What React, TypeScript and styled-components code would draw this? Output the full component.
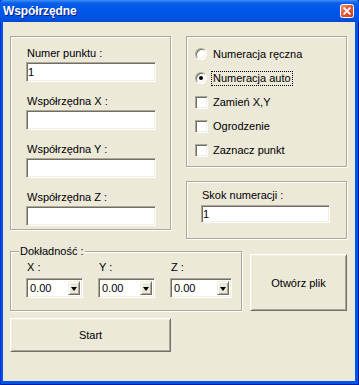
import React from 'react';
import styled, { createGlobalStyle } from 'styled-components';

const face = '#ECE9D8';
const shadow = '#ACA899';
const darkShadow = '#716F64';
const light = '#F1EFE2';

const GlobalStyle = createGlobalStyle`
  html, body {
    margin: 0;
    padding: 0;
  }
  body {
    font-family: "Liberation Sans", Arial, sans-serif;
    font-size: 11px;
    color: #000;
  }
`;

const Window = styled.div`
  width: 359px;
  height: 385px;
  box-sizing: border-box;
  display: flex;
  flex-direction: column;
  background: #0055e5;
  box-shadow: inset 1px 0 0 #0831d9, inset -1px 0 0 #001ea0, inset 0 -1px 0 #001ea0;
`;

const TitleBar = styled.div`
  height: 22px;
  flex: none;
  display: flex;
  align-items: center;
  justify-content: space-between;
  padding: 0 5px 0 3px;
  background: linear-gradient(
    to bottom,
    #3d8ff7 0%,
    #0a5ee8 14%,
    #0057ea 40%,
    #0054e3 80%,
    #0048d4 100%
  );
  border-radius: 4px 4px 0 0;
`;

const TitleText = styled.span`
  color: #fff;
  font-weight: bold;
  font-size: 12px;
  text-shadow: 1px 1px 0 #0a1e8c;
  letter-spacing: -0.1px;
`;

const Body = styled.div`
  flex: 1;
  margin: 0 4px 4px 3px;
  background: ${face};
  padding: 14px 0 0 7px;
  box-sizing: border-box;
`;

const Row = styled.div<{ $gap: number; $top?: number }>`
  display: flex;
  align-items: flex-start;
  gap: ${(p) => p.$gap}px;
  margin-top: ${(p) => p.$top || 0}px;
`;

const Group = styled.div<{ $w: number; $h: number }>`
  position: relative;
  box-sizing: border-box;
  width: ${(p) => p.$w}px;
  height: ${(p) => p.$h}px;
  border: 1px solid ${shadow};
  box-shadow: inset 1px 1px 0 #fff, 1px 1px 0 #fff;
`;

const FieldsGroup = styled(Group)`
  display: flex;
  flex-direction: column;
  gap: 13px;
  padding: 10px 0 0 15px;
`;

const Column = styled.div`
  display: flex;
  flex-direction: column;
  gap: 14px;
`;

const OptionsGroup = styled(Group)`
  display: flex;
  flex-direction: column;
  padding: 5px 0 0 8px;
`;

const SkokGroup = styled(Group)`
  padding: 7px 0 0 14px;
`;

const PrecisionGroup = styled(Group)`
  display: flex;
  gap: 15px;
  padding: 9px 0 0 15px;
`;

const Legend = styled.span`
  position: absolute;
  top: -7px;
  left: 8px;
  padding: 0 1px;
  line-height: 13px;
  background: ${face};
`;

const Field = styled.div`
  display: flex;
  flex-direction: column;
`;

const Label = styled.span<{ $gap?: number }>`
  line-height: 13px;
  padding-left: 1px;
  margin-bottom: ${(p) => (p.$gap === undefined ? 2 : p.$gap)}px;
`;

const TextBox = styled.input<{ $w: number; $h: number }>`
  box-sizing: border-box;
  width: ${(p) => p.$w}px;
  height: ${(p) => p.$h}px;
  margin: 0;
  padding: 0 1px;
  background: #fff;
  border: 1px solid;
  border-color: ${shadow} #fff #fff ${shadow};
  box-shadow: inset 1px 1px 0 ${darkShadow}, inset -1px -1px 0 ${light};
  font-family: "Liberation Sans", Arial, sans-serif;
  font-size: 11px;
  color: #000;
  outline: none;
`;

const OptionRow = styled.div`
  height: 24px;
  display: flex;
  align-items: center;
  gap: 4px;
`;

const Radio = styled.span<{ $on?: boolean }>`
  position: relative;
  box-sizing: border-box;
  width: 12px;
  height: 12px;
  margin-right: 1px;
  border-radius: 50%;
  background: #fff;
  border: 1px solid;
  border-color: ${shadow} #fff #fff ${shadow};
  box-shadow: inset 1px 1px 0 ${darkShadow}, inset -1px -1px 0 ${light};
  &::after {
    content: '';
    display: ${(p) => (p.$on ? 'block' : 'none')};
    position: absolute;
    left: 3px;
    top: 3px;
    width: 4px;
    height: 4px;
    border-radius: 50%;
    background: #000;
  }
`;

const Check = styled.span`
  box-sizing: border-box;
  width: 13px;
  height: 13px;
  background: #fff;
  border: 1px solid;
  border-color: ${shadow} #fff #fff ${shadow};
  box-shadow: inset 1px 1px 0 ${darkShadow}, inset -1px -1px 0 ${light};
`;

const OptionText = styled.span<{ $focus?: boolean }>`
  line-height: 13px;
  padding: 0 1px;
  border: 1px ${(p) => (p.$focus ? 'dotted #000' : 'solid transparent')};
  margin-left: -1px;
`;

const Combo = styled.div<{ $w: number }>`
  box-sizing: border-box;
  width: ${(p) => p.$w}px;
  height: 20px;
  display: flex;
  background: #fff;
  border: 1px solid;
  border-color: ${shadow} #fff #fff ${shadow};
  box-shadow: inset 1px 1px 0 ${darkShadow}, inset -1px -1px 0 ${light};
  padding: 2px;
`;

const ComboValue = styled.span`
  flex: 1;
  line-height: 14px;
  padding-left: 1px;
`;

const DropButton = styled.span`
  box-sizing: border-box;
  width: 12px;
  display: flex;
  align-items: center;
  justify-content: center;
  background: ${face};
  border: 1px solid;
  border-color: ${light} ${darkShadow} ${darkShadow} ${light};
  box-shadow: inset 1px 1px 0 #fff, inset -1px -1px 0 ${shadow};
  &::after {
    content: '';
    width: 0;
    height: 0;
    border-left: 3.5px solid transparent;
    border-right: 3.5px solid transparent;
    border-top: 4px solid #000;
    margin-top: 1px;
  }
`;

const Button = styled.button<{ $w: number; $h: number; $top?: number }>`
  box-sizing: border-box;
  width: ${(p) => p.$w}px;
  height: ${(p) => p.$h}px;
  margin: ${(p) => p.$top || 0}px 0 0 0;
  padding: 0;
  background: ${face};
  border: 1px solid;
  border-color: #fff ${darkShadow} ${darkShadow} #fff;
  box-shadow: inset 1px 1px 0 ${light}, inset -1px -1px 0 ${shadow};
  font-family: "Liberation Sans", Arial, sans-serif;
  font-size: 11px;
  color: #000;
`;

const CloseIcon = () => (
  <svg width="14" height="14" viewBox="0 0 14 14">
    <defs>
      <linearGradient id="cl" x1="0" y1="0" x2="1" y2="1">
        <stop offset="0" stopColor="#f59a78" />
        <stop offset="0.45" stopColor="#e45a34" />
        <stop offset="1" stopColor="#cc3a1c" />
      </linearGradient>
    </defs>
    <rect x="0.5" y="0.5" width="13" height="13" rx="2" fill="url(#cl)" stroke="#fff" />
    <path d="M4.2 4.2 L9.8 9.8 M9.8 4.2 L4.2 9.8" stroke="#fff" strokeWidth="1.8" strokeLinecap="square" />
  </svg>
);

const fields = ['Numer punktu :', 'Współrzędna X :', 'Współrzędna Y :', 'Współrzędna Z :'];

const combos = [
  { label: 'X :', w: 57 },
  { label: 'Y :', w: 57 },
  { label: 'Z :', w: 62 },
];

const App = () => (
  <>
    <GlobalStyle />
    <Window>
      <TitleBar>
        <TitleText>Współrzędne</TitleText>
        <CloseIcon />
      </TitleBar>
      <Body>
        <Row $gap={15}>
          <FieldsGroup $w={161} $h={194}>
            {fields.map((f, i) => (
              <Field key={f}>
                <Label>{f}</Label>
                <TextBox $w={130} $h={20} defaultValue={i === 0 ? '1' : ''} />
              </Field>
            ))}
          </FieldsGroup>
          <Column>
            <OptionsGroup $w={161} $h={131}>
              <OptionRow>
                <Radio />
                <OptionText>Numeracja ręczna</OptionText>
              </OptionRow>
              <OptionRow>
                <Radio $on />
                <OptionText $focus>Numeracja auto</OptionText>
              </OptionRow>
              <OptionRow>
                <Check />
                <OptionText>Zamień X,Y</OptionText>
              </OptionRow>
              <OptionRow>
                <Check />
                <OptionText>Ogrodzenie</OptionText>
              </OptionRow>
              <OptionRow>
                <Check />
                <OptionText>Zaznacz punkt</OptionText>
              </OptionRow>
            </OptionsGroup>
            <SkokGroup $w={161} $h={58}>
              <Field>
                <Label $gap={3}>Skok numeracji :</Label>
                <TextBox $w={129} $h={18} defaultValue="1" />
              </Field>
            </SkokGroup>
          </Column>
        </Row>
        <Row $gap={8} $top={12}>
          <PrecisionGroup $w={232} $h={60}>
            <Legend>Dokładność :</Legend>
            {combos.map((c) => (
              <Field key={c.label}>
                <Label $gap={4}>{c.label}</Label>
                <Combo $w={c.w}>
                  <ComboValue>0.00</ComboValue>
                  <DropButton />
                </Combo>
              </Field>
            ))}
          </PrecisionGroup>
          <Button $w={97} $h={57} $top={3}>
            Otwórz plik
          </Button>
        </Row>
        <Button $w={161} $h={34} $top={7}>
          Start
        </Button>
      </Body>
    </Window>
  </>
);

export default App;
